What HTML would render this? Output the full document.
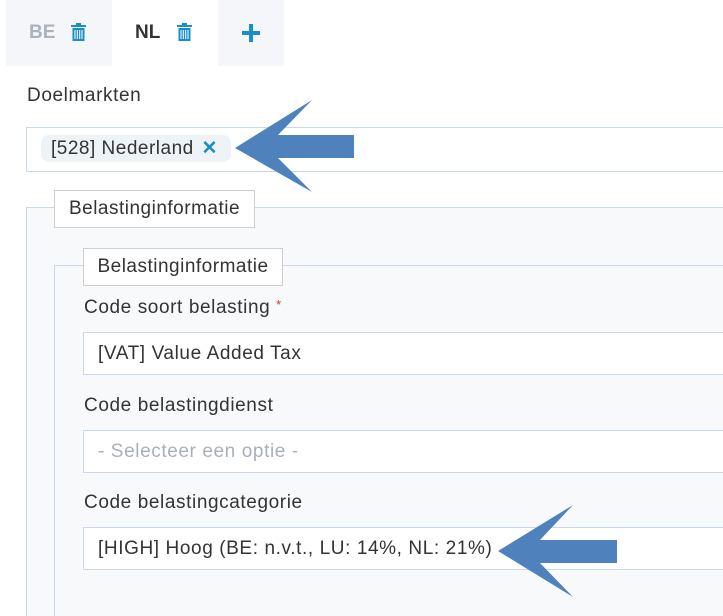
<!DOCTYPE html>
<html style="overflow:hidden"><head><style>
html,body{margin:0;width:723px;height:616px;overflow:hidden}
body{background:#fff;font-family:"Liberation Sans",sans-serif;color:#333;position:relative}
.a{position:absolute}
.tab{position:absolute;top:0;height:66px}
.inp{position:absolute;background:#fff;border:1px solid #c9d8ea;box-sizing:border-box;font-size:19px;letter-spacing:0.6px;padding-left:14px;display:flex;align-items:center}
.lbl{position:absolute;font-size:19px;letter-spacing:0.6px;color:#333}
.leg{position:absolute;background:#fff;border:1px solid #cfcfcf;box-sizing:border-box;font-size:19px;letter-spacing:0.5px;display:flex;align-items:center;justify-content:center;white-space:nowrap}
</style></head><body>
<div class="tab" style="left:6px;width:106px;background:#f4f6f9"></div>
<div class="tab" style="left:218px;width:66px;background:#f4f6f9"></div>
<div class="a" style="left:29px;top:22px;font-weight:bold;font-size:19px;color:#aab2bb">BE</div>
<div class="a" style="left:135px;top:22px;font-weight:bold;font-size:19px;color:#333">NL</div>
<svg class="a" style="left:71px;top:23px" width="15" height="18" viewBox="0 0 15 18"><rect x="0" y="2" width="15" height="2" fill="#1a8fc6"/><rect x="5" y="0" width="5" height="2" fill="#1a8fc6"/><rect x="1.5" y="5" width="12" height="13" fill="#1a8fc6"/><path d="M4 7v9M6.3 7v9M8.7 7v9M11 7v9" stroke="#fff" stroke-width="1"/></svg>
<svg class="a" style="left:177px;top:23px" width="15" height="18" viewBox="0 0 15 18"><rect x="0" y="2" width="15" height="2" fill="#1a8fc6"/><rect x="5" y="0" width="5" height="2" fill="#1a8fc6"/><rect x="1.5" y="5" width="12" height="13" fill="#1a8fc6"/><path d="M4 7v9M6.3 7v9M8.7 7v9M11 7v9" stroke="#fff" stroke-width="1"/></svg>
<svg class="a" style="left:242px;top:24px" width="18" height="18"><path d="M9 0v18M0 9h18" stroke="#1a8fc6" stroke-width="4"/></svg>
<div class="lbl" style="left:27px;top:85px">Doelmarkten</div>
<div class="inp" style="left:26px;top:127px;width:697px;height:45px;border-right:none"></div>
<div class="a" style="left:41px;top:135px;width:190px;height:27px;background:#eef3f8;border-radius:8px;font-size:19px;letter-spacing:0.5px;line-height:27px;padding-left:10px;box-sizing:border-box;white-space:nowrap">[528] Nederland <span style="color:#1a8fc6;font-weight:bold;margin-left:2px">✕</span></div>
<svg class="a" style="left:0;top:0" width="723" height="616"><polygon points="235,148 312,100 278,135 354,135 354,158 278,158 312,192" fill="#4f81bd"/></svg>
<div class="a" style="left:26px;top:207px;width:697px;height:409px;background:#f7f9fb;border-left:1px solid #c9d8ea;border-top:1px solid #c9d8ea;box-sizing:border-box"></div>
<div class="leg" style="left:54px;top:190px;width:201px;height:38px">Belastinginformatie</div>
<div class="a" style="left:54px;top:265px;width:669px;height:351px;border-left:1px solid #c9d8ea;border-top:1px solid #c9d8ea;box-sizing:border-box"></div>
<div class="leg" style="left:83px;top:248px;width:200px;height:38px">Belastinginformatie</div>
<div class="lbl" style="left:84px;top:297px">Code soort belasting <span style="color:#d33;font-size:13px;vertical-align:top">*</span></div>
<div class="inp" style="left:83px;top:332px;width:640px;height:43px;border-right:none">[VAT] Value Added Tax</div>
<div class="lbl" style="left:84px;top:395px">Code belastingdienst</div>
<div class="inp" style="left:83px;top:430px;width:640px;height:43px;border-right:none;color:#a8b0b8">- Selecteer een optie -</div>
<div class="lbl" style="left:84px;top:492px">Code belastingcategorie</div>
<div class="inp" style="left:83px;top:527px;width:640px;height:43px;border-right:none;white-space:nowrap">[HIGH] Hoog (BE: n.v.t., LU: 14%, NL: 21%)</div>
<svg class="a" style="left:0;top:0" width="723" height="616"><polygon points="498,551 573,505 540,540 617,540 617,563 540,563 573,597" fill="#4f81bd"/></svg>
</body></html>
